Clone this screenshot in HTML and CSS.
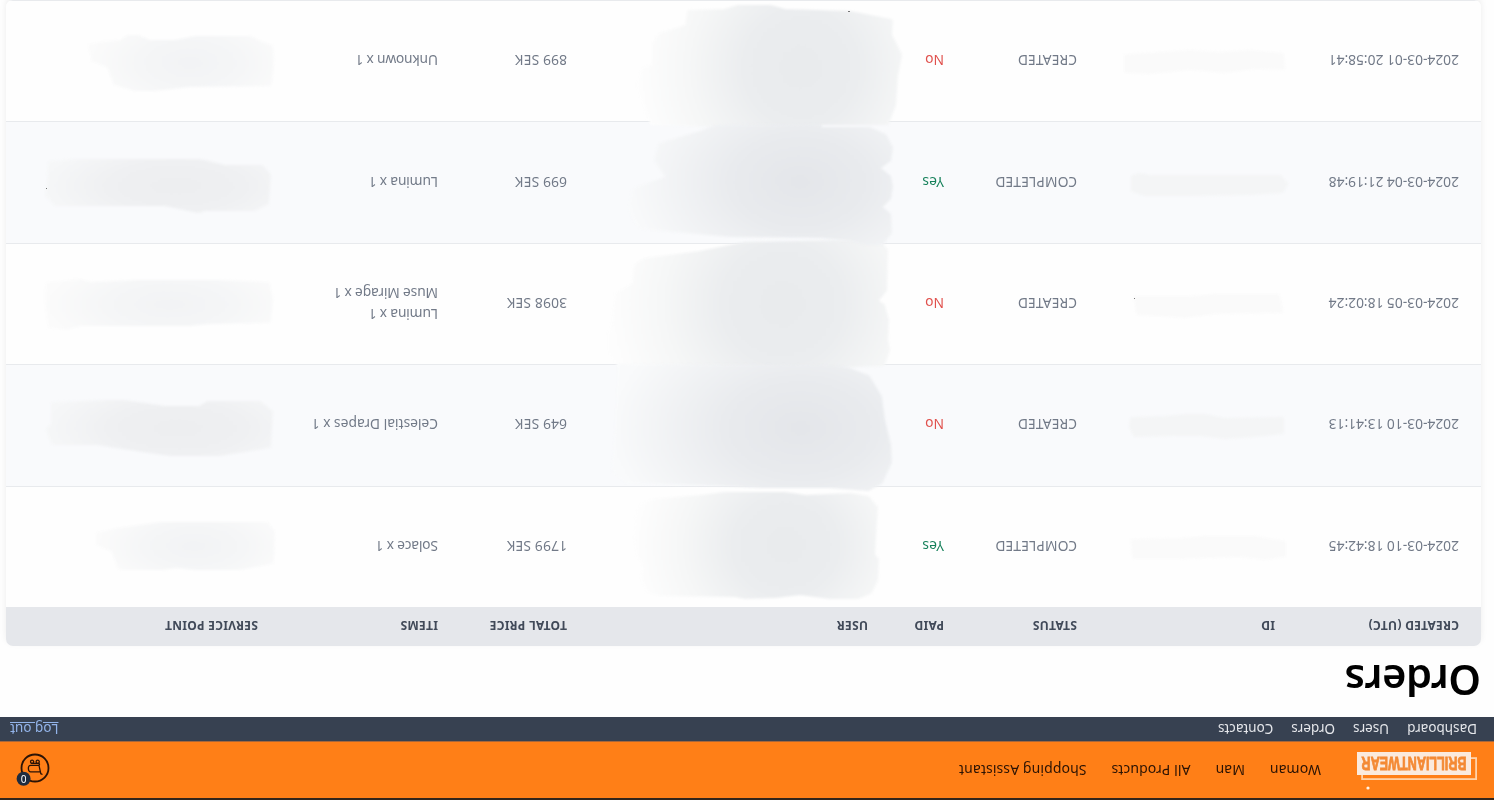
FILE: index.html
```html
<!DOCTYPE html>
<html lang="en">
<head>
<meta charset="utf-8">
<title>Orders</title>
<link rel="stylesheet" href="styles.css">
</head>
<body>
<div class="screen">
  <header class="topbar">
    <svg class="logo" width="126" height="44" viewBox="0 0 126 44">
      <rect class="logo-outline" x="2.9" y="11.9" width="114" height="21"/>
      <rect class="logo-box" x="8" y="16" width="114" height="23"/>
      <circle class="logo-dot" cx="111" cy="3" r="1.600"/>
      <text class="logo-text" x="12.500" y="34" textLength="105" lengthAdjust="spacingAndGlyphs">BRILLIANTWEAR</text>
    </svg>
    <nav class="main-nav"><a>Woman</a><a>Man</a><a>All Products</a><a>Shopping Assistant</a></nav>
    <svg class="cart" width="34" height="34" viewBox="-15 -15 34 34">
      <circle class="cart-line" r="13.500"/>
      <path class="cart-line thin" d="M-7.500 -6.500L-5.800 -5.700L-4 2.600H4.300C6 2.600 6.800 1.500 6.600 -1C6.400 -3 5.800 -3.900 4.500 -3.900H-5.300M-3.700 2.600C-5 3.300 -4.800 4.600 -3 4.600H4"/>
      <circle class="cart-line thin" cx="-2.700" cy="6.200" r="1.600"/>
      <circle class="cart-line thin" cx="2.900" cy="6.200" r="1.600"/>
      <circle class="badge" cx="11.400" cy="-10.800" r="7"/>
      <text class="badge-text" x="11.400" y="-7.300">0</text>
    </svg>
  </header>
  <nav class="admin-nav">
    <div class="admin-links"><a>Dashboard</a><a>Users</a><a>Orders</a><a>Contacts</a></div>
    <a class="logout">Log out</a>
  </nav>
  <main>
    <h1>Orders</h1>
    <div class="table">
      <div class="row head"><span>Created (UTC)</span><span>ID</span><span>Status</span><span>Paid</span><span>User</span><span>Total price</span><span>Items</span><span>Service point</span></div>
      <div class="row"><span>2024-03-10 18:42:45</span><span></span><span class="caps">COMPLETED</span><span class="yes">Yes</span><span></span><span class="caps">1799 SEK</span><span class="items">Solace x 1</span><span></span></div>
      <div class="row alt"><span>2024-03-10 13:41:13</span><span></span><span class="caps">CREATED</span><span class="no">No</span><span></span><span class="caps">649 SEK</span><span>Celestial Drapes x 1</span><span></span></div>
      <div class="row"><span>2024-03-05 18:02:24</span><span></span><span class="caps">CREATED</span><span class="no">No</span><span></span><span class="caps">3098 SEK</span><span class="items">Lumina x 1<br>Muse Mirage x 1</span><span></span></div>
      <div class="row alt"><span>2024-03-04 21:19:48</span><span></span><span class="caps">COMPLETED</span><span class="yes">Yes</span><span></span><span class="caps">699 SEK</span><span class="items">Lumina x 1</span><span></span></div>
      <div class="row"><span>2024-03-01 20:58:41</span><span></span><span class="caps">CREATED</span><span class="no">No</span><span></span><span class="caps">899 SEK</span><span class="items">Unknown x 1</span><span></span></div>
    </div>
  </main>
</div>
<svg class="smudges" width="1494" height="800" viewBox="0 0 1494 800">
  <defs>
    <radialGradient id="uw" cx=".62" cy=".5" r=".62" gradientTransform="translate(0 -.6) scale(1 2.2)">
      <stop offset="0" stop-color="#e9ebed"/><stop offset=".35" stop-color="#ebedef"/><stop offset=".7" stop-color="#f6f7f7"/><stop offset="1" stop-color="#fdfdfd"/>
    </radialGradient>
    <radialGradient id="ua" gradientUnits="userSpaceOnUse" cx="0" cy="0" r="1" gradientTransform="translate(800 182) scale(175 120)">
      <stop offset="0" stop-color="#e4e6ea"/><stop offset=".4" stop-color="#e9ebee"/><stop offset="1" stop-color="#f9fafb"/>
    </radialGradient>
    <radialGradient id="ub" gradientUnits="userSpaceOnUse" cx="0" cy="0" r="1" gradientTransform="translate(800 428) scale(190 125)">
      <stop offset="0" stop-color="#e4e6ea"/><stop offset=".4" stop-color="#e9ebee"/><stop offset="1" stop-color="#f9fafb"/>
    </radialGradient>
    <radialGradient id="sw" cx=".55" cy=".5" r=".56" gradientTransform="translate(0 -.4) scale(1 1.8)">
      <stop offset="0" stop-color="#f2f3f5"/><stop offset=".5" stop-color="#f5f6f7"/><stop offset="1" stop-color="#fbfbfb"/>
    </radialGradient>
    <radialGradient id="sa" cx=".58" cy=".5" r=".6" gradientTransform="translate(0 -.3) scale(1 1.6)">
      <stop offset="0" stop-color="#edeef0"/><stop offset=".5" stop-color="#eff0f2"/><stop offset="1" stop-color="#f6f7f8"/>
    </radialGradient>
    <filter id="soft" x="-5%" y="-5%" width="110%" height="110%" color-interpolation-filters="sRGB"><feGaussianBlur stdDeviation="1"/></filter>
  </defs>
  <g fill="url(#uw)" stroke="url(#uw)" filter="url(#soft)">
    <path d="M652 123L643 100L639 85L643 70L654 65L654 45L660 35L687 27L689 12L725 11L738 7L770 7L785 11L850 13L891 21L890 35L900 55L896 75L894 105L887 123L820 123L818 128H715V125Z"/>
    <path d="M645 260L636 266L634 285L617 295L614 320L610 335L610 350L620 366H835L883 364L888 350L886 340L887 320L883 306L876 301L885 290L886 250L880 244L850 242L745 244L700 253Z"/>
    <path d="M652 501L641 506L637 520L636 540L639 558L645 562L643 580L648 590L660 594L735 595L745 597L775 596L800 593L830 597H858L870 592L876 580L877 560L873 555L875 520L876 508L868 498L850 495L806 497L785 494L725 494L700 497Z"/>
  </g>
  <g filter="url(#soft)">
  <path fill="url(#ua)" stroke="url(#ua)" d="M715 127L700 133L660 145L656 160L668 178L634 190L630 210L640 227L708 233L730 235L820 236L850 239L865 243H882L890 232L889 215L880 207L889 198L891 187L889 177L878 168L889 160L891 148L885 136L870 129H820V126Z"/>
  <path fill="url(#ub)" stroke="url(#ub)" d="M620 366L617 430L614 470L626 481L720 484L760 486L830 486L868 489L881 482L890 462L889 445L883 420L880 397L868 377L850 370L835 367Z"/>
  </g>
  <g fill="url(#sw)" stroke="url(#sw)" filter="url(#soft)">
    <path d="M90 46L100 44L121 42L128 37L138 37L150 42H175L195 38H250L260 43L271 47L272 60L270 84L190 85L155 89H135L115 83L109 66L93 60Z"/>
    <path d="M48 284L80 281L90 284L135 282H220L268 284L271 300L269 321L210 322L190 324H80L65 328L50 326L47 305Z"/>
    <path d="M98 534L118 530L160 524H267L273 532L272 562L240 568H195L175 566L163 568H120L113 550L98 544Z"/>
  </g>
  <g fill="url(#sa)" stroke="url(#sa)" filter="url(#soft)">
    <path d="M50 163L75 161H200L225 167H262L269 175L267 203L255 209H205L198 211L165 204H55L47 195L49 182Z"/>
    <path d="M53 404L105 402H125L165 408H200L208 403H260L271 412L269 446L220 454H170L115 446L97 443H53L48 430L53 424Z"/>
  </g>
  <g class="ids-white" filter="url(#soft)">
    <path d="M1126 56L1160 54L1190 52L1220 54L1250 52L1282 55L1283 68L1255 67L1225 71L1190 68L1150 72L1126 71Z"/>
    <path d="M1136 298L1190 298L1215 296H1278L1281 311L1215 312L1185 316L1138 313Z"/>
    <path d="M1133 541L1180 540L1205 538H1255L1284 543V555L1265 558L1240 555L1180 557H1134Z"/>
  </g>
  <g class="ids-alt" filter="url(#soft)">
    <path d="M1133 177L1140 175L1150 177H1280L1286 184L1282 191L1250 193L1190 194H1145L1133 190Z"/>
    <path d="M1132 419L1165 418L1185 416H1205L1225 420L1282 419L1282 432L1255 435L1225 437L1200 434H1175L1135 435L1131 427Z"/>
  </g>
  <g class="specks"><rect x="1134" y="298" width="1" height="1"/><rect x="848" y="11" width="2" height="1"/><rect x="46" y="188" width="1" height="1"/></g>
</svg>
</body>
</html>
```
FILE: styles.css
```css
* { box-sizing: border-box; }
body { margin: 0; background: #fefefe; font-family: "Noto Sans", sans-serif; position: relative; overflow: hidden; }
.screen { width: 1494px; height: 800px; overflow: hidden; transform: rotate(180deg); background: #fefefe; }
.topbar { height: 59px; border-top: 2px solid #33251b; border-bottom: 1px solid #a9673a; background: #ff7f17; display: flex; align-items: flex-start; padding: 7px 16px 0 15px; }
.logo { flex: none; overflow: visible; }
.logo-outline { fill: none; stroke: #ffd2a8; stroke-width: 1.8; }
.logo-box { fill: #fbeadd; }
.logo-dot { fill: #fff3e6; }
.logo-text { font: bold 17.500px "Liberation Sans", sans-serif; fill: #f48a35; stroke: #f48a35; stroke-width: .8; }
.main-nav { display: flex; gap: 24.800px; margin: 10.500px 0 0 32px; font-size: 14px; letter-spacing: .1px; line-height: 20px; color: #2b1304; }
.cart { margin: 8px 0 0 auto; overflow: visible; }
.cart-line { fill: none; stroke: #2b1306; stroke-width: 1.8; }
.thin { stroke-width: 1.3; }
.badge { fill: #1f2c3f; }
.badge-text { font-size: 10px; fill: #fff; text-anchor: middle; }
.admin-nav { height: 24px; background: #374151; display: flex; justify-content: space-between; padding: 2px 10px 0 17px; font-size: 13.500px; line-height: 21px; color: #e5e7eb; }
.admin-links { display: flex; gap: 18px; }
.logout { color: #93b4ea; text-decoration: underline; }
h1 { margin: 0; padding: 8px 0 0 13px; height: 71px; font-size: 41.500px; font-weight: 600; letter-spacing: -.4px; line-height: 56px; color: #000; }
.table { width: 1475px; margin-left: 13px; border-radius: 7px; box-shadow: 0 3px 7px rgba(0,0,0,.07); overflow: hidden; }
.row { display: grid; grid-template-columns: 184px 198px 133px 76px 301px 129px 180px 1fr; align-items: center; height: 121.400px; padding: 1px 0 0 22px; border-bottom: 1px solid #e8eaed; background: #fefefe; font-size: 13.800px; line-height: 21px; color: #727a88; }
.alt { background: #f9fafc; }
.head { height: 39px; background: #e5e7eb; border: 0; font-size: 12px; font-weight: 700; letter-spacing: .28px; text-transform: uppercase; color: #414a59; }
.caps { letter-spacing: .15px; }
.items { letter-spacing: -.16px; }
.yes { color: #15805a; }
.no { color: #e0504c; }
.smudges { position: absolute; left: 0; top: 0; stroke-width: 4; stroke-linejoin: round; }
.ids-white { fill: #fafafa; stroke: #fafafa; }
.ids-alt { fill: #f4f5f6; stroke: #f4f5f6; }
.specks { fill: #777; stroke: none; }
```
